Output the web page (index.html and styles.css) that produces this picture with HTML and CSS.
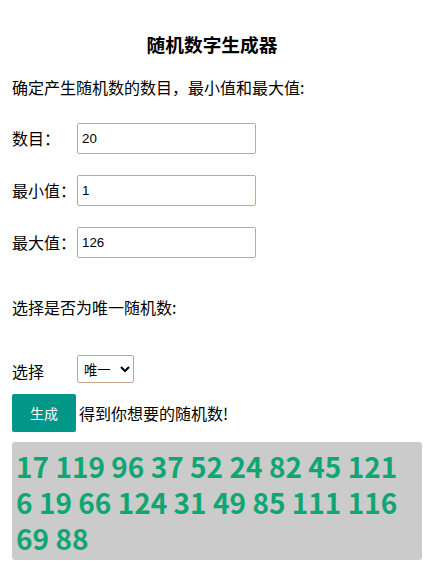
FILE: index.html
```html
<!DOCTYPE html>
<html lang="zh">
<head>
    <meta charset="UTF-8">
    <title>随机数字生成器</title>
    <link rel="stylesheet" href="styles.css">
</head>
<body>
    <div class="container">
        <h3 class="title">随机数字生成器</h3>
        <p class="intro">确定产生随机数的数目，最小值和最大值:</p>

        <div class="field">
            <label for="count">数目：</label>
            <input type="text" id="count" value="20">
        </div>
        <div class="field">
            <label for="min">最小值：</label>
            <input type="text" id="min" value="1">
        </div>
        <div class="field">
            <label for="max">最大值：</label>
            <input type="text" id="max" value="126">
        </div>

        <p class="intro unique-title">选择是否为唯一随机数:</p>

        <div class="field select-row">
            <label for="unique">选择</label>
            <select id="unique">
                <option>唯一</option>
                <option>可重复</option>
            </select>
        </div>

        <div class="action">
            <button class="button">生成</button>
            <span>得到你想要的随机数!</span>
        </div>

        <div class="result">17 119 96 37 52 24 82 45 121 6 19 66 124 31 49 85 111 116 69 88</div>
    </div>
</body>
</html>
```

FILE: styles.css
```css
body {
    font-family: "Noto Sans CJK SC", "Noto Sans", sans-serif;
    font-size: 16px;
    color: #000;
    background-color: #fff;
    margin: 0;
    padding: 0;
}
.container {
    padding: 30px 7px 0 12px;
}
.title {
    font-size: 18.72px;
    line-height: 27px;
    font-weight: bold;
    text-align: center;
    margin: 0;
    padding-right: 10px;
}
.intro {
    margin: 19px 0 0;
    line-height: 23px;
}
.field {
    display: flex;
    align-items: center;
    margin-top: 24px;
}
.field + .field {
    margin-top: 21px;
}
.field label {
    width: 65px;
    line-height: 23px;
}
.field input {
    width: 179px;
    height: 31px;
    box-sizing: border-box;
    padding: 0 4px;
    border: 1px solid #c9a590;
    border-radius: 2px;
    font-family: "Liberation Sans", Arial, sans-serif;
    font-size: 13.33px;
    color: #000;
}
.unique-title {
    margin-top: 38px;
}
.select-row {
    margin-top: 36px;
}
.select-row label {
    padding-top: 4px;
}
.select-row select {
    width: 57px;
    height: 28px;
    box-sizing: border-box;
    border: 1px solid #c9a590;
    border-radius: 2px;
    background-color: #fff;
    font-family: "Noto Sans CJK SC", sans-serif;
    font-size: 13.33px;
    color: #000;
    padding: 0 2px;
}
.action {
    display: flex;
    align-items: center;
    margin-top: 11px;
}
.button {
    width: 64px;
    height: 38px;
    margin-right: 3px;
    background-color: #009688;
    color: #fff;
    border: none;
    border-radius: 2px;
    font-family: "Noto Sans CJK SC", sans-serif;
    font-size: 14px;
    cursor: pointer;
}
.result {
    margin-top: 10px;
    background-color: #cbcbcb;
    border-radius: 3px;
    padding: 6px 6px 4px 4px;
    color: #0fa673;
    font-weight: bold;
    font-size: 28px;
    line-height: 36px;
}
```
